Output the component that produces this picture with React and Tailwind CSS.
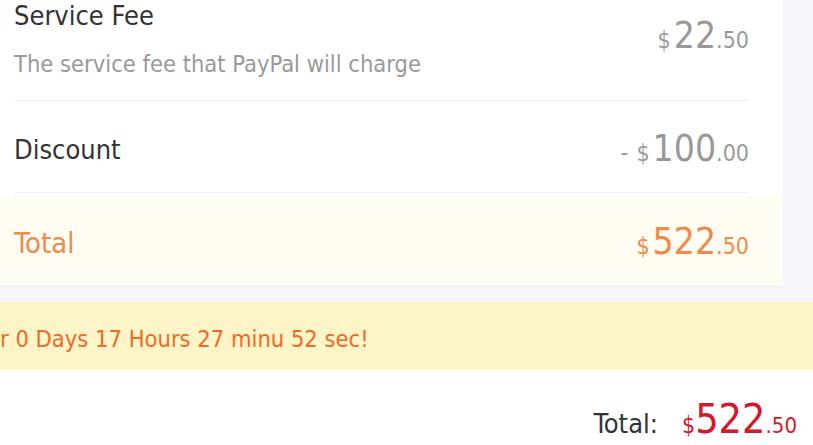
import React from 'react';

const Amount = ({ prefix, int, dec, color = 'text-[#999999]' }) => (
    <div className={`flex items-baseline ${color}`}>
        {prefix && <span className="text-[24px] mr-[8px]">{prefix}</span>}
        <span className="text-[23px] mr-[3px]">$</span>
        <span className="text-[37px] leading-none">{int}</span>
        <span className="text-[23px]">.{dec}</span>
    </div>
);

const App = () => {
    return (
        <div className="w-[813px] h-[445px] overflow-hidden bg-white font-['DejaVu_Sans_Condensed','DejaVu_Sans',sans-serif]">
            {/* Fee card */}
            <div className="bg-[#f6f7fa] pr-[31px] pb-[15px]">
                <div className="bg-white border-b border-[#eceef1]">
                    <div className="ml-[14px] mr-[33px]">
                        <div className="h-[101px] flex justify-between border-b border-[#f0f0f0]">
                            <div>
                                <div className="text-[27px] leading-[31px] text-[#333333]">Service Fee</div>
                                <div className="mt-[18px] text-[23.5px] leading-[30px] text-[#999999]">The service fee that PayPal will charge</div>
                            </div>
                            <div className="pt-[17px]">
                                <Amount int="22" dec="50" />
                            </div>
                        </div>
                        <div className="h-[92px] pt-[7px] flex items-center justify-between border-b border-[#f0f0f0]">
                            <div className="text-[27px] text-[#333333]">Discount</div>
                            <Amount prefix="-" int="100" dec="00" />
                        </div>
                    </div>
                    <div className="mt-[2px] h-[91px] pt-[6px] bg-[#fffcf2] pl-[14px] pr-[33px] flex items-center justify-between">
                        <div className="text-[29px] text-[#ef8a4a]">Total</div>
                        <Amount int="522" dec="50" color="text-[#ef8a4a]" />
                    </div>
                </div>
            </div>

            {/* Countdown banner */}
            <div className="h-[68px] pt-[8px] bg-[#fdf5c8] flex items-center text-[23.5px] text-[#ef6a26] whitespace-nowrap">
                r 0 Days 17 Hours 27 minu 52 sec!
            </div>

            {/* Footer total */}
            <div className="h-[74px] flex items-baseline justify-end pr-[16px] pt-[29px]">
                <span className="text-[27px] text-[#333333]">Total:</span>
                <div className="ml-[24px] flex items-baseline text-[#d6162b]">
                    <span className="text-[23px]">$</span>
                    <span className="text-[41px] leading-none">522</span>
                    <span className="text-[22px]">.50</span>
                </div>
            </div>
        </div>
    );
};

export default App;
